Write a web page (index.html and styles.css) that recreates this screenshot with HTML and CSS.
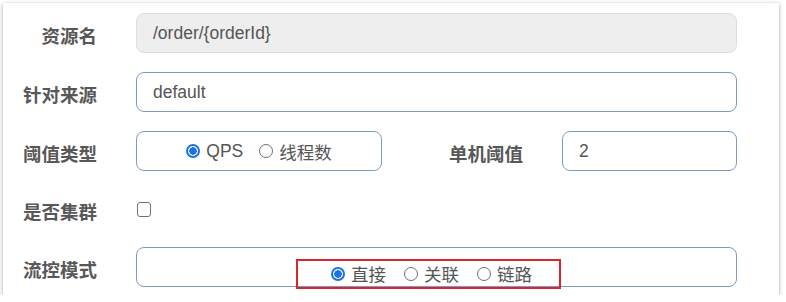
FILE: index.html
```html
<!DOCTYPE html>
<html lang="zh-CN">
<head>
    <meta charset="UTF-8">
    <title>流控规则</title>
    <link rel="stylesheet" href="styles.css">
</head>
<body>
    <div class="card">
        <div class="form-row">
            <label class="form-label">资源名</label>
            <input class="form-input" type="text" value="/order/{orderId}" disabled>
        </div>

        <div class="form-row">
            <label class="form-label">针对来源</label>
            <input class="form-input" type="text" value="default">
        </div>

        <div class="form-row">
            <label class="form-label">阈值类型</label>
            <div class="radio-box radio-box-small">
                <label class="radio"><input type="radio" name="grade" checked><span>QPS</span></label>
                <label class="radio"><input type="radio" name="grade"><span>线程数</span></label>
            </div>
            <label class="form-label form-label-inline">单机阈值</label>
            <input class="form-input form-input-small" type="text" value="2">
        </div>

        <div class="form-row form-row-check">
            <label class="form-label">是否集群</label>
            <input class="checkbox" type="checkbox">
        </div>

        <div class="form-row">
            <label class="form-label">流控模式</label>
            <div class="radio-box radio-box-wide">
                <div class="highlight">
                    <label class="radio"><input type="radio" name="strategy" checked><span>直接</span></label>
                    <label class="radio"><input type="radio" name="strategy"><span>关联</span></label>
                    <label class="radio"><input type="radio" name="strategy"><span>链路</span></label>
                </div>
            </div>
        </div>
    </div>
</body>
</html>
```

FILE: styles.css
```css
* {
    margin: 0;
    padding: 0;
    box-sizing: border-box;
}

body {
    background: #fff;
    font-family: "Liberation Sans", "Noto Sans CJK SC", sans-serif;
    color: #555;
}

.card {
    margin: 3px 7px 0 3px;
    height: 292px;
    background: #fff;
    box-shadow: 0 1px 4px rgba(0, 0, 0, 0.35);
    padding-top: 10px;
}

.form-row {
    display: flex;
    align-items: center;
    height: 40px;
    margin-bottom: 19px;
}

.form-row-check {
    height: 38px;
    margin-bottom: 19px;
}

.form-label {
    width: 94px;
    flex-shrink: 0;
    margin-right: 39px;
    padding-top: 4px;
    text-align: right;
    font-family: "Noto Sans CJK SC", sans-serif;
    font-size: 18.5px;
    font-weight: 700;
    color: #585858;
}

.form-label-inline {
    margin-left: 47px;
}

.form-input {
    width: 601px;
    height: 40px;
    padding: 0 16px;
    border: 1px solid #7d9cc4;
    border-radius: 8px;
    background: #fff;
    font-family: inherit;
    font-size: 17.5px;
    color: #555;
    outline: none;
}

.form-input:disabled {
    background: #eeeeee;
    border-color: #dedede;
    color: #555;
}

.form-input-small {
    width: 175px;
}

.radio-box {
    height: 40px;
    border: 1px solid #7d9cc4;
    border-radius: 8px;
    display: flex;
    align-items: center;
    justify-content: center;
}

.radio-box-small {
    width: 246px;
}

.radio-box-wide {
    width: 601px;
    padding-right: 16px;
}

.highlight {
    width: 265px;
    height: 30px;
    border: 2px solid #d8262c;
    display: flex;
    align-items: center;
    justify-content: center;
    padding-left: 6px;
    margin-top: 13px;
}

.radio {
    display: flex;
    align-items: center;
    font-size: 17.5px;
    color: #555;
    margin-right: 16px;
}

.radio:last-child {
    margin-right: 0;
}

.highlight .radio {
    margin-right: 18px;
}

.highlight .radio:last-child {
    margin-right: 0;
}

.radio input {
    appearance: none;
    width: 14px;
    height: 14px;
    border: 1px solid #6f6f6f;
    border-radius: 50%;
    margin-right: 6px;
    background: #fff;
}

.radio input:checked {
    border: 2px solid #1a73e8;
    background: radial-gradient(circle, #1a73e8 0 3.5px, #fff 4px);
}

.checkbox {
    appearance: none;
    width: 14px;
    height: 15px;
    border: 1px solid #707070;
    border-radius: 3px;
    background: #fff;
    margin-left: 1px;
}
```
